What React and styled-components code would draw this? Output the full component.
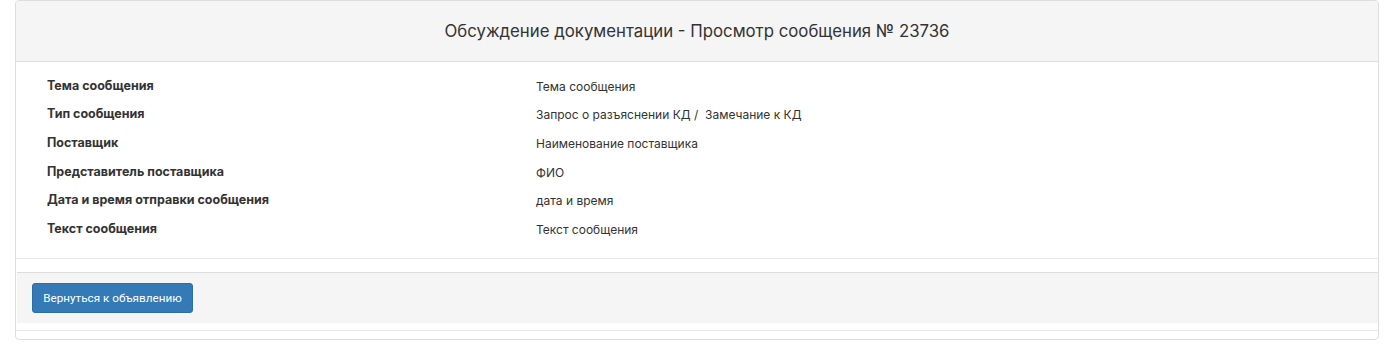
import React from "react";
import styled, { createGlobalStyle } from "styled-components";

const Global = createGlobalStyle`
  html, body { margin: 0; padding: 0; background: #fff; }
  body { font-family: Inter, "Noto Sans", sans-serif; color: #333; }
`;

const Page = styled.div`
  padding: 0 15px;
`;

const Panel = styled.div`
  width: 1364px;
  box-sizing: border-box;
  border: 1px solid #ddd;
  border-radius: 4px;
  background: #fff;
  overflow: hidden;
`;

const Header = styled.div`
  height: 60px;
  background: #f5f5f5;
  border-bottom: 1px solid #ddd;
  display: flex;
  align-items: center;
  justify-content: center;
  font-family: Inter, "Noto Sans", sans-serif;
  font-size: 16.8px;
  color: #333;
`;

const Body = styled.div`
  padding: 10px 0 14px 31px;
  border-bottom: 1px solid #e8e8e8;
`;

const Row = styled.div`
  display: grid;
  grid-template-columns: 489px 1fr;
  height: 28.6px;
  align-items: center;
`;

const Label = styled.div`
  font-size: 12.5px;
  font-weight: 700;
  color: #333;
  transform: translateY(-1px);
`;

const Value = styled.div`
  font-size: 12px;
  color: #333;
  white-space: pre;
`;

const Gap = styled.div`
  height: 13px;
`;

const Footer = styled.div`
  margin-left: 1px;
  background: #f5f5f5;
  border-top: 1px solid #ddd;
  height: 50px;
  padding: 0 15px;
  display: flex;
  align-items: center;
`;

const Button = styled.button`
  height: 30px;
  width: 161px;
  padding: 0;
  background: #337ab7;
  border: 1px solid #2e6da4;
  border-radius: 3px;
  color: #fff;
  font-family: Roboto, "Noto Sans", sans-serif;
  font-size: 11.7px;
  cursor: pointer;
`;

const Bottom = styled.div`
  height: 7px;
  border-bottom: 1px solid #e8e8e8;
  margin-bottom: 8px;
`;

const rows = [
  ["Тема сообщения", "Тема сообщения"],
  ["Тип сообщения", "Запрос о разъяснении КД /  Замечание к КД"],
  ["Поставщик", "Наименование поставщика"],
  ["Представитель поставщика", "ФИО"],
  ["Дата и время отправки сообщения", "дата и время"],
  ["Текст сообщения", "Текст сообщения"],
];

export default function App() {
  return (
    <Page>
      <Global />
      <Panel>
        <Header>Обсуждение документации - Просмотр сообщения № 23736</Header>
        <Body>
          {rows.map(([l, v]) => (
            <Row key={l}>
              <Label>{l}</Label>
              <Value>{v}</Value>
            </Row>
          ))}
        </Body>
        <Gap />
        <Footer>
          <Button>Вернуться к объявлению</Button>
        </Footer>
        <Bottom />
      </Panel>
    </Page>
  );
}
